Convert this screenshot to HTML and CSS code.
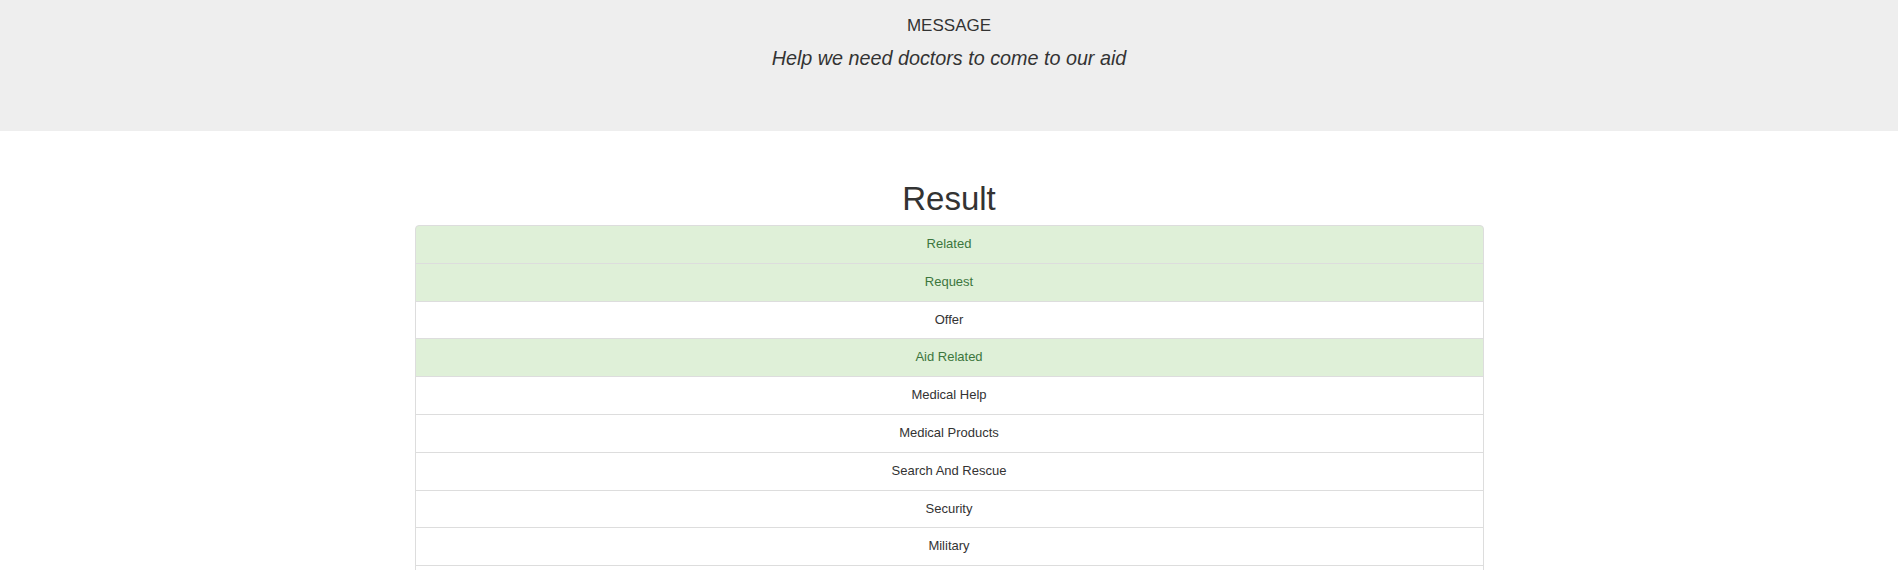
FILE: index.html
```html
<!DOCTYPE html>
<html>
<head>
<meta charset="utf-8">
<link rel="stylesheet" href="styles.css">
</head>
<body>
<div class="jumbotron">
  <div class="label">MESSAGE</div>
  <div class="message">Help we need doctors to come to our aid</div>
</div>
<div class="content">
  <h1 class="title">Result</h1>
  <ul class="list-group">
    <li class="item success">Related</li>
    <li class="item success">Request</li>
    <li class="item">Offer</li>
    <li class="item success">Aid Related</li>
    <li class="item">Medical Help</li>
    <li class="item">Medical Products</li>
    <li class="item">Search And Rescue</li>
    <li class="item">Security</li>
    <li class="item">Military</li>
    <li class="item">Child Alone</li>
    <li class="item">Water</li>
  </ul>
</div>
</body>
</html>
```
FILE: styles.css
```css
html, body {
  margin: 0;
  padding: 0;
  background: #fff;
  font-family: "Liberation Sans", Arial, sans-serif;
  color: #333;
}
.jumbotron {
  background: #eeeeee;
  height: 131px;
  box-sizing: border-box;
  padding-top: 16px;
  text-align: center;
}
.label {
  font-size: 17px;
  line-height: 20px;
}
.message {
  margin-top: 8px;
  font-size: 19.75px;
  line-height: 28px;
  font-style: italic;
}
.content {
  width: 1069px;
  margin: 0 auto;
}
.title {
  margin: 50px 0 8px;
  font-size: 33px;
  line-height: 36px;
  font-weight: 400;
  text-align: center;
  color: #333;
}
.list-group {
  list-style: none;
  margin: 0;
  padding: 0;
}
.item {
  border: 1px solid #dddddd;
  margin-bottom: -1px;
  padding: 10px 15px;
  font-size: 13px;
  line-height: 16.8px;
  text-align: center;
  background: #fff;
  color: #333;
}
.item:first-child {
  border-top-left-radius: 4px;
  border-top-right-radius: 4px;
}
.item.success {
  background: #dff0d8;
  color: #3c763d;
}
```
